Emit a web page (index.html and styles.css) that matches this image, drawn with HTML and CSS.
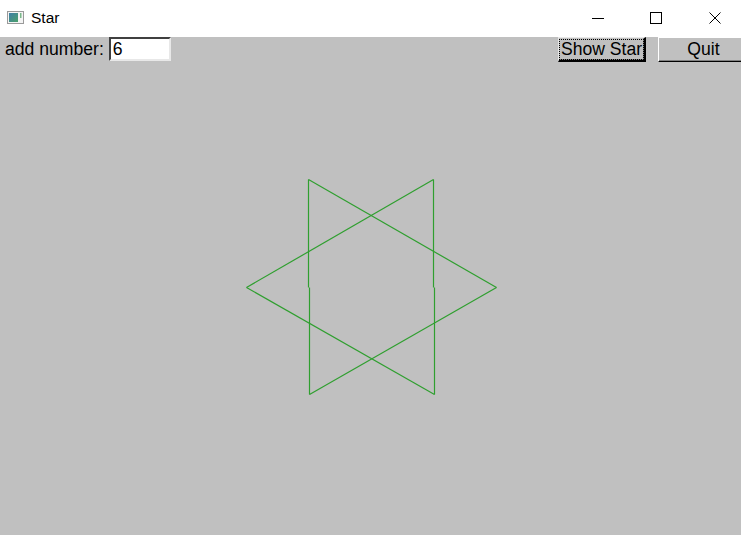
FILE: index.html
```html
<!DOCTYPE html>
<html>
<head>
<meta charset="utf-8">
<link rel="stylesheet" href="styles.css">
</head>
<body>
<div class="window">
  <div class="titlebar">
    <svg class="app-icon" width="17" height="13" viewBox="0 0 17 13">
      <rect x="0.5" y="0.5" width="16" height="12" fill="#f4f4f4" stroke="#9a9a9a"/>
      <defs>
        <linearGradient id="g" x1="0" y1="0" x2="1" y2="1">
          <stop offset="0" stop-color="#3f7fa8"/>
          <stop offset="1" stop-color="#4aa06a"/>
        </linearGradient>
      </defs>
      <rect x="2" y="2" width="9" height="9" fill="url(#g)"/>
      <rect x="13" y="2" width="1.5" height="5" fill="#7ab88a"/>
    </svg>
    <span class="title">Star</span>
    <div class="controls">
      <span class="ctl"><svg width="12" height="12" viewBox="0 0 12 12"><line x1="0" y1="6.5" x2="12" y2="6.5" stroke="#000" stroke-width="1"/></svg></span>
      <span class="ctl"><svg width="12" height="12" viewBox="0 0 12 12"><rect x="0.5" y="0.5" width="11" height="11" fill="none" stroke="#000" stroke-width="1"/></svg></span>
      <span class="ctl"><svg width="12" height="12" viewBox="0 0 12 12"><path d="M0.5 0.5 L11.5 11.5 M11.5 0.5 L0.5 11.5" stroke="#000" stroke-width="1"/></svg></span>
    </div>
  </div>
  <div class="client">
    <div class="toolbar">
      <label class="label">add number:</label>
      <div class="entry">6</div>
      <div class="buttons">
        <div class="btn default"><span class="focus">Show Star</span></div>
        <div class="btn quit">Quit</div>
      </div>
    </div>
    <svg class="canvas" width="741" height="473" viewBox="0 0 741 473">
      <g stroke="#2f9f2f" stroke-width="1.2" fill="none">
        <line x1="308.5" y1="117.5" x2="496.5" y2="225.5"/>
        <line x1="496.5" y1="225.5" x2="309.5" y2="332.5"/>
        <line x1="246.5" y1="225.5" x2="433.5" y2="117.5"/>
        <line x1="246.5" y1="225.5" x2="434.5" y2="332.5"/>
        <line x1="308.5" y1="117.5" x2="308.5" y2="225.5"/>
        <line x1="309.5" y1="225.5" x2="309.5" y2="332.5"/>
        <line x1="433.5" y1="117.5" x2="433.5" y2="225.5"/>
        <line x1="434.5" y1="225.5" x2="434.5" y2="332.5"/>
      </g>
    </svg>
  </div>
</div>
</body>
</html>
```

FILE: styles.css
```css
html, body {
  margin: 0;
  padding: 0;
  overflow: hidden;
  background: #c0c0c0;
}
.window {
  width: 741px;
  height: 535px;
  display: flex;
  flex-direction: column;
  overflow: hidden;
}
.titlebar {
  height: 37px;
  flex: none;
  background: #ffffff;
  display: flex;
  align-items: center;
  font-family: "Liberation Sans", Arial, sans-serif;
  font-size: 15.5px;
  color: #000;
}
.app-icon {
  margin-left: 7px;
  margin-top: -3px;
}
.title {
  margin-left: 7px;
  margin-top: -2px;
}
.controls {
  margin-left: auto;
  margin-right: -3px;
  display: flex;
  height: 100%;
}
.ctl {
  width: 58.5px;
  display: flex;
  align-items: center;
  justify-content: center;
  margin-top: -2px;
}
.client {
  flex: 1;
  background: #c0c0c0;
  display: flex;
  flex-direction: column;
}
.toolbar {
  height: 25px;
  display: flex;
  align-items: center;
  font-family: "Liberation Sans", Arial, sans-serif;
  font-size: 17.6px;
  color: #000;
}
.label {
  margin-left: 5px;
  margin-right: 5px;
}
.entry {
  height: 20px;
  margin-top: -1px;
  background: #fff;
  border-top: 2px solid #404040;
  border-left: 2px solid #404040;
  border-right: 2px solid #e8e8e8;
  border-bottom: 2px solid #e8e8e8;
  box-sizing: content-box;
  padding-left: 2px;
  line-height: 20px;
  width: 56px;
}
.buttons {
  margin-left: auto;
  display: flex;
  gap: 12px;
  margin-right: -7px;
  height: 25px;
}
.btn {
  box-sizing: border-box;
  height: 25px;
  display: flex;
  align-items: center;
  justify-content: center;
  background: #c0c0c0;
  border-top: 1px solid #ffffff;
  border-left: 1px solid #ffffff;
  border-right: 1px solid #000000;
  border-bottom: 1px solid #000000;
  box-shadow: inset -1px -1px 0 #808080;
}
.btn.default {
  width: 88px;
  border-right: 2px solid #000;
  border-bottom: 2px solid #000;
  border-top: 1px solid #e8e8e8;
  border-left: 1px solid #e8e8e8;
}
.focus {
  outline: 1px dotted #000;
  outline-offset: 0px;
  padding: 0 1px;
  line-height: 19px;
}
.btn.quit {
  width: 90px;
  border-right: none;
}
.canvas {
  display: block;
}
```
